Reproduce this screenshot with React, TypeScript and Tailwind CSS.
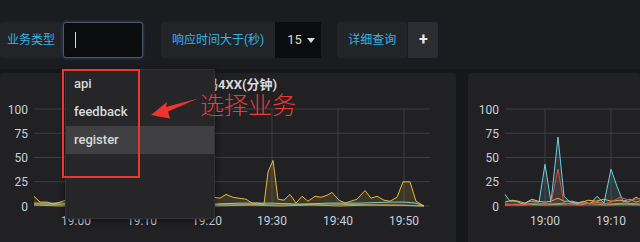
import React from 'react';

const FONT = { fontFamily: 'Roboto, "Noto Sans CJK SC", sans-serif' };

type Pt = [number, number];

// value -> page y (100 at y=109, 0 at y=206)
const vy = (v: number) => 206 - v * 0.97;

function pts(data: Pt[]) {
  return data.map(([x, v]) => `${x},${vy(v).toFixed(1)}`).join(' ');
}

function area(data: Pt[]) {
  const first = data[0][0];
  const last = data[data.length - 1][0];
  return `${first},206 ${pts(data)} ${last},206`;
}

const leftYellow: Pt[] = [
  [34, 10], [40, 4], [47, 4], [53, 2], [60, 4], [66, 6], [73, 5], [79, 8], [86, 6], [92, 9],
  [99, 7], [105, 5], [112, 8], [118, 6], [125, 9], [131, 7], [138, 5], [144, 8], [151, 6],
  [157, 9], [164, 7], [170, 10], [177, 6], [183, 8], [190, 11], [196, 9], [203, 8], [209, 10],
  [214, 9], [220, 8], [226, 12], [233, 9], [239, 8], [246, 7], [252, 3], [258, 3], [264, 2],
  [268, 35], [273, 47], [278, 7], [284, 6], [290, 12], [296, 3], [302, 10], [308, 5], [315, 10],
  [321, 9], [327, 11], [332, 14], [339, 6], [345, 3], [351, 5], [357, 7], [365, 16], [371, 8],
  [377, 10], [384, 6], [390, 5], [397, 9], [403, 25], [410, 25], [416, 5], [424, 0],
];
const leftCyan: Pt[] = [
  [34, 3], [60, 3], [86, 2], [112, 3], [138, 2], [164, 3], [190, 3], [214, 2], [240, 3],
  [270, 3], [300, 2], [330, 3], [360, 3], [390, 4], [405, 4], [416, 3], [424, 0],
];
const leftOrange: Pt[] = [
  [34, 1], [60, 0], [86, 1], [112, 0], [138, 1], [164, 0], [190, 1], [214, 0], [250, 1],
  [280, 0], [310, 1], [340, 0], [370, 1], [400, 1], [424, 0],
];
const leftGreen: Pt[] = [
  [34, 2], [80, 1], [130, 2], [180, 1], [230, 2], [280, 1], [330, 2], [380, 1], [424, 0],
];

const rightCyan: Pt[] = [
  [505, 12], [510, 5], [516, 5], [523, 2], [530, 5], [536, 5], [539, 4], [545, 43], [551, 4],
  [558, 71], [564, 10], [570, 4], [577, 3], [584, 5], [590, 2], [597, 10], [604, 3], [611, 38],
  [617, 20], [623, 5], [630, 7], [636, 4], [642, 6],
];
const rightRed: Pt[] = [
  [505, 1], [515, 2], [525, 1], [535, 3], [545, 2], [551, 3], [558, 38], [564, 2], [570, 3],
  [577, 1], [584, 4], [590, 2], [597, 5], [604, 2], [611, 4], [620, 9], [630, 6], [642, 8],
];
const rightYellow: Pt[] = [
  [505, 4], [512, 6], [518, 5], [525, 3], [532, 7], [538, 5], [545, 4], [551, 5], [558, 8],
  [564, 5], [572, 5], [580, 3], [588, 6], [596, 5], [604, 7], [611, 5], [620, 6], [628, 4],
  [636, 9], [642, 6],
];
const rightOrange: Pt[] = [
  [505, 2], [520, 1], [535, 3], [550, 2], [565, 3], [580, 1], [595, 4], [610, 2], [625, 3],
  [642, 2],
];
const rightGreen: Pt[] = [
  [505, 1], [525, 2], [545, 1], [565, 2], [585, 3], [605, 1], [625, 2], [642, 1],
];

function Series({ data, color, fill = 0.1 }: { data: Pt[]; color: string; fill?: number }) {
  return (
    <g>
      <polygon points={area(data)} fill={color} fillOpacity={fill} />
      <polyline points={pts(data)} fill="none" stroke={color} strokeWidth={1} />
    </g>
  );
}

function Axes({ x0, x1, labelX, ticks }: { x0: number; x1: number; labelX: number; ticks: [number, string][] }) {
  return (
    <g>
      {[100, 75, 50, 25, 0].map((v) => (
        <g key={v}>
          <line x1={x0} x2={x1} y1={vy(v)} y2={vy(v)} stroke="#3d3e42" strokeWidth={1} />
          <text x={labelX} y={vy(v) + 4.5} textAnchor="end" fill="#c7d0d9" fontSize={12}>
            {v}
          </text>
        </g>
      ))}
      {ticks.map(([x, t]) => (
        <g key={t}>
          <line x1={x} x2={x} y1={109} y2={206} stroke="#3d3e42" strokeWidth={1} />
          <text x={x} y={225} textAnchor="middle" fill="#c7d0d9" fontSize={12}>
            {t}
          </text>
        </g>
      ))}
    </g>
  );
}

function Legend({ items }: { items: [number, string][] }) {
  return (
    <>
      {items.map(([x, t]) => (
        <text key={x} x={x} y={251} fill="#c7d0d9" fontSize={12}>
          {t}
        </text>
      ))}
    </>
  );
}

export default function App() {
  return (
    <div className="relative h-[242px] w-[640px] overflow-hidden bg-[#161719]" style={FONT}>
      {/* filter bar */}
      <div className="flex h-[69px] items-start bg-[#1b1c1f] pt-[22px]">
        <div className="flex h-[36px] items-center rounded-l-[3px] bg-[#232428] px-[7px] text-[12px] text-[#33b5e5]">
          业务类型
        </div>
        <div className="ml-px flex h-[36px] w-[80px] items-center rounded-[3px] border border-[#4b5564] bg-[#0b0c0e] pl-[11px] shadow-[0_0_3px_#3a5a80]">
          <span className="h-[16px] w-px bg-[#d8d9da]" />
        </div>
        <div className="ml-[18px] flex h-[36px] items-center rounded-l-[3px] bg-[#232428] px-[11px] text-[12px] text-[#33b5e5]">
          响应时间大于(秒)
        </div>
        <div className="flex h-[36px] w-[46px] items-center gap-[5px] bg-[#0b0c0e] pl-[12px] text-[13px] text-[#d8d9da]">
          15
          <svg width="8" height="5" viewBox="0 0 8 5">
            <path d="M0 0h8L4 5z" fill="#d8d9da" />
          </svg>
        </div>
        <div className="ml-[16px] flex h-[36px] items-center rounded-l-[3px] bg-[#232428] px-[11px] text-[12px] text-[#33b5e5]">
          详细查询
        </div>
        <div className="ml-px flex h-[36px] w-[30px] items-center justify-center rounded-r-[3px] bg-[#2c2d32] text-[16px] font-bold text-[#e8e8e8]">
          +
        </div>
      </div>

      {/* panels */}
      <div className="mt-[4px] flex gap-[12px]">
        <div className="h-[200px] w-[456px] shrink-0 rounded-[3px] bg-[#212124]">
          <div className="flex h-[24px] items-center justify-center text-[13px] font-bold text-[#d8d9da]">
            状态码4XX(分钟)
          </div>
          <svg width="456" height="145" viewBox="0 97 456 145" className="block">
            <Axes x0={34} x1={430} labelX={28} ticks={[[76, '19:00'], [142, '19:10'], [207, '19:20'], [272, '19:30'], [338, '19:40'], [404, '19:50']]} />
            <Series data={leftGreen} color="#7eb26d" fill={0.05} />
            <Series data={leftOrange} color="#ef843c" fill={0.05} />
            <Series data={leftCyan} color="#6ed0e0" fill={0.08} />
            <Series data={leftYellow} color="#eab839" fill={0.15} />
            <Legend items={[[37, '404'], [83, '499'], [128, '403'], [175, '400']]} />
          </svg>
        </div>
        <div className="h-[200px] flex-1 rounded-[3px] bg-[#212124]">
          <div className="h-[24px]" />
          <svg width="172" height="145" viewBox="468 97 172 145" className="block">
            <Axes x0={505} x1={640} labelX={499} ticks={[[545, '19:00'], [611, '19:10']]} />
            <Series data={rightGreen} color="#7eb26d" fill={0.05} />
            <Series data={rightOrange} color="#ef843c" fill={0.05} />
            <Series data={rightYellow} color="#eab839" fill={0.08} />
            <Series data={rightCyan} color="#6ed0e0" fill={0.12} />
            <Series data={rightRed} color="#e24d42" fill={0.12} />
            <Legend items={[[508, '504'], [555, '502'], [602, '500']]} />
          </svg>
        </div>
      </div>

      {/* dropdown menu */}
      <div className="absolute left-[65px] top-[69px] h-[150px] w-[150px] rounded-[2px] border border-[#333336] bg-[#262628] text-[13px] font-medium text-[#d8d9da] shadow-[0_2px_6px_rgba(0,0,0,0.5)]">
        <div className="flex h-[28px] items-center pl-[8px]">api</div>
        <div className="flex h-[28px] items-center pl-[8px]">feedback</div>
        <div className="flex h-[28px] items-center bg-[#404043] pl-[8px]">register</div>
      </div>

      {/* annotation */}
      <div className="absolute left-[62px] top-[69px] h-[109px] w-[78px] border-2 border-[#f0352e]" />
      <svg className="absolute left-[148px] top-[94px]" width="52" height="26" viewBox="148 94 52 26">
        <polygon
          points="151,115 167,102 166,107 198,98.5 168,111.5 170,118.5"
          fill="#f0352e"
        />
      </svg>
      <div
        className="absolute left-[200px] top-[88px] text-[24px] font-light leading-[32px] text-[#ec3a34]"
        style={{ fontFamily: '"Noto Sans CJK SC", sans-serif' }}
      >
        选择业务
      </div>
    </div>
  );
}
